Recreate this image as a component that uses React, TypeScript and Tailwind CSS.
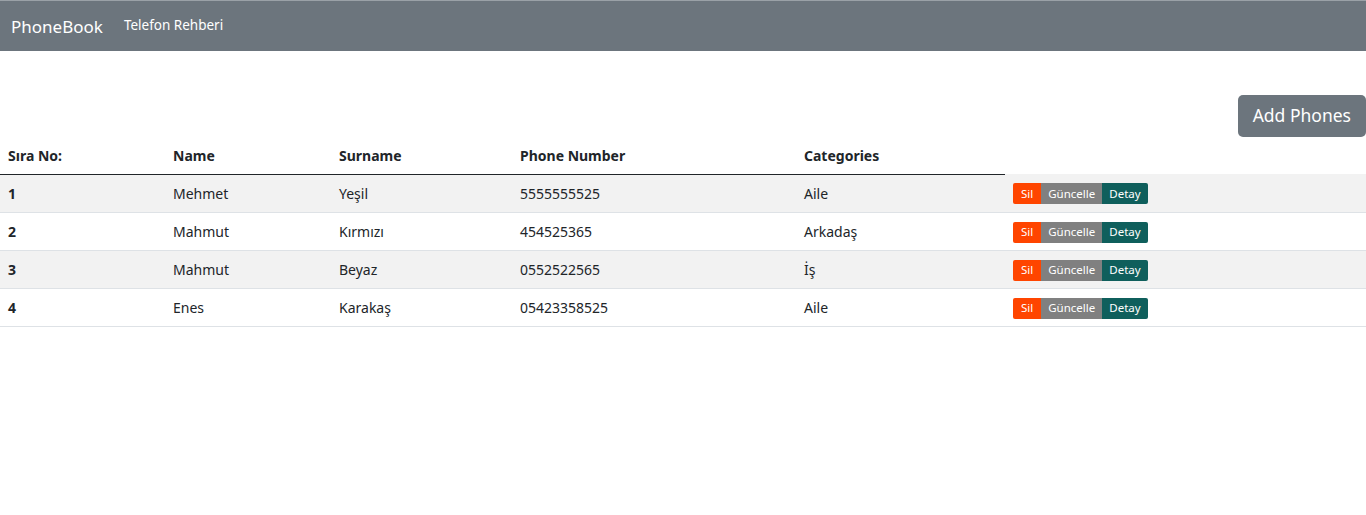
import React from "react";

const rows = [
  { n: 1, name: "Mehmet", surname: "Yeşil", phone: "5555555525", cat: "Aile" },
  { n: 2, name: "Mahmut", surname: "Kırmızı", phone: "454525365", cat: "Arkadaş" },
  { n: 3, name: "Mahmut", surname: "Beyaz", phone: "0552522565", cat: "İş" },
  { n: 4, name: "Enes", surname: "Karakaş", phone: "05423358525", cat: "Aile" },
];

export default function App() {
  return (
    <div className="min-h-[515px] bg-white text-[#212529]" style={{ fontFamily: '"Noto Sans", "Open Sans", sans-serif' }}>
      <nav className="h-[51px] bg-[#6c757d] border-t border-[#9aa1a7] flex items-center px-[11px]">
        <span className="text-[17px] text-white mr-[21px] leading-none">PhoneBook</span>
        <span className="text-[13.5px] text-white leading-none">Telefon Rehberi</span>
      </nav>
      <div className="flex justify-end pt-[44px]">
        <button className="h-[42px] px-[15px] bg-[#6c757d] text-white text-[17.5px] rounded-[5px] leading-none">Add Phones</button>
      </div>
      <table className="w-full border-collapse text-[14px]">
        <colgroup>
          <col className="w-[165px]" />
          <col className="w-[166px]" />
          <col className="w-[181px]" />
          <col className="w-[284px]" />
          <col className="w-[209px]" />
          <col />
        </colgroup>
        <thead>
          <tr className="h-[37px]">
            <th className="text-left font-bold px-2 border-b border-[#212529]">Sıra No:</th>
            <th className="text-left font-bold px-2 border-b border-[#212529]">Name</th>
            <th className="text-left font-bold px-2 border-b border-[#212529]">Surname</th>
            <th className="text-left font-bold px-2 border-b border-[#212529]">Phone Number</th>
            <th className="text-left font-bold px-2 border-b border-[#212529]">Categories</th>
            <th></th>
          </tr>
        </thead>
        <tbody>
          {rows.map((r, i) => (
            <tr key={r.n} className={`h-[38px] border-b border-[#dee2e6] ${i % 2 === 0 ? "bg-[#f2f2f2]" : "bg-white"}`}>
              <td className="px-2 font-bold">{r.n}</td>
              <td className="px-2">{r.name}</td>
              <td className="px-2">{r.surname}</td>
              <td className="px-2">{r.phone}</td>
              <td className="px-2">{r.cat}</td>
              <td className="px-2 pt-[2px]">
                <div className="flex text-[11.5px] text-white leading-none">
                  <span className="h-[21px] flex items-center px-[8px] bg-[#ff4500] rounded-l-[2px]">Sil</span>
                  <span className="h-[21px] flex items-center px-[7px] bg-[#808080]">Güncelle</span>
                  <span className="h-[21px] flex items-center px-[7px] bg-[#0f5f5c] rounded-r-[2px]">Detay</span>
                </div>
              </td>
            </tr>
          ))}
        </tbody>
      </table>
    </div>
  );
}
